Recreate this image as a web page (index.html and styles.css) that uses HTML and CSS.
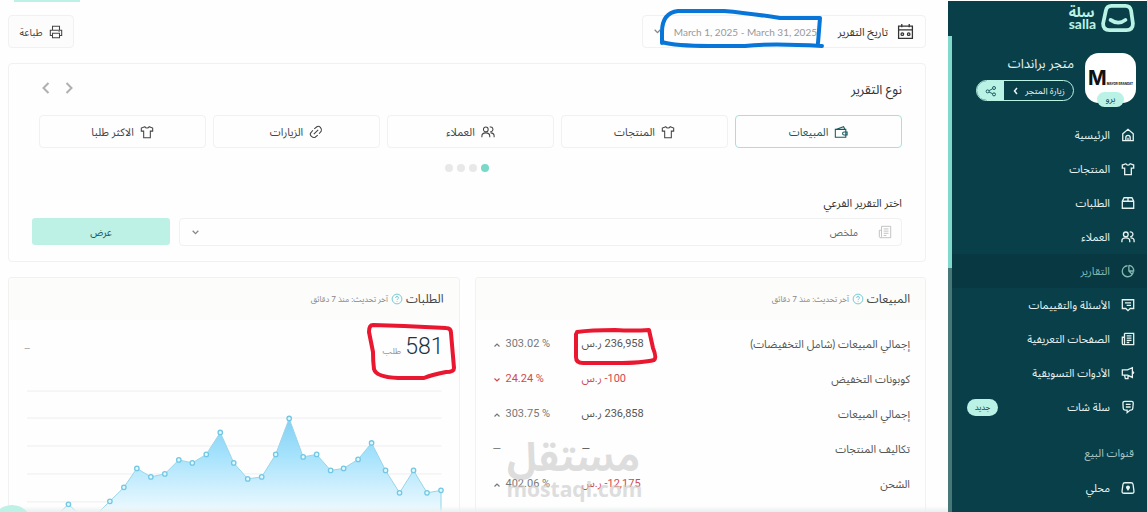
FILE: index.html
```html
<!DOCTYPE html>
<html lang="ar" dir="rtl">
<head>
<meta charset="utf-8">
<title>التقارير</title>
<link rel="stylesheet" href="styles.css">
</head>
<body>
<svg class="sprite" aria-hidden="true">
  <symbol id="shirt" viewBox="0 0 16 16"><path d="M5.500 2 1.500 3.500 1.500 7h2.700v7.500h7.600V7h2.700L14.500 3.500 10.500 2C9.500 4 6.500 4 5.500 2Z"/></symbol>
  <symbol id="users" viewBox="0 0 16 16"><circle cx="5.500" cy="5" r="2.700"/><path d="M1 14v-1.500C1 10 3 9 5.500 9s4.500 1 4.500 3.500V14M10 2.400a2.700 2.700 0 1 1 .5 5.200M11 9c2.500 0 4 1.200 4 3.500V14"/></symbol>
  <symbol id="news" viewBox="0 0 16 16"><path d="M4 1.500h10.500v13H3A1.500 1.500 0 0 1 1.500 13V6H4M4 1.500V13a1.500 1.500 0 0 1-1 1.500M6.500 4.500h5.500M6.500 7h5.500M6.500 9.500h5.500M6.500 12h3"/></symbol>
  <symbol id="help" viewBox="0 0 16 16"><circle cx="8" cy="8" r="6.500"/><path d="M6 6.500C6 4 10 4 10 6.500 10 8 8 8 8 9.500M8 11v1"/></symbol>
  <symbol id="up" viewBox="0 0 8 8"><path d="m1.500 5.500 2.500-2.500 2.500 2.500"/></symbol>
  <symbol id="down" viewBox="0 0 8 8"><path d="m1.500 2.500 2.500 2.500 2.500-2.500"/></symbol>
</svg>

<aside class="sidebar">
  <a class="logo" href="#">
    <svg class="logo-mark" viewBox="0 0 36 30"><path d="M11 2h15q5 0 6 5l2 14q0 7-7 7H9q-7 0-7-7L5 7Q6 2 11 2ZM10 17q8.500 6 16 0"/></svg>
    <span class="logo-text"><span>سلة</span><span class="latin">salla</span></span>
  </a>
  <div class="store">
    <div class="avatar"><b>M</b><small>MAYOR BRANDAT</small><span class="plan">برو</span></div>
    <div class="store-info">
      <h2>متجر براندات</h2>
      <div class="visit">
        <a href="#">زيارة المتجر <svg class="tiny" viewBox="0 0 8 8"><path d="M5 1 2.500 4 5 7"/></svg></a>
        <button class="share" aria-label="مشاركة"><svg viewBox="0 0 16 16"><circle cx="3.500" cy="8.500" r="2"/><circle cx="12" cy="4" r="2"/><circle cx="12" cy="12.500" r="2"/><path d="m5.500 7.500 4.500-2.500M5.500 9.500l4.500 2"/></svg></button>
      </div>
    </div>
  </div>
  <nav>
    <a href="#"><svg viewBox="0 0 16 16"><path d="M2 6.500 8 1.500l6 5v8H2ZM5.500 14.500V11q0-2.500 2.500-2.500t2.500 2.500v3.500M8 11v3"/></svg><span>الرئيسية</span></a>
    <a href="#"><svg><use href="#shirt"/></svg><span>المنتجات</span></a>
    <a href="#"><svg viewBox="0 0 16 16"><path d="M3.500 2h9L14.500 6v8h-13V6ZM1.500 6h13M8 2v4"/></svg><span>الطلبات</span></a>
    <a href="#"><svg><use href="#users"/></svg><span>العملاء</span></a>
    <a class="active" href="#"><svg viewBox="0 0 16 16"><path d="M7.500 2A6.300 6.300 0 1 0 14 9M9 1.500V8l4 4M9 8h5.500A6 6 0 0 0 9 1.500"/></svg><span>التقارير</span></a>
    <a href="#"><svg viewBox="0 0 16 16"><path d="M1.500 2h13v10h-4L8 14.500 5.500 12h-4ZM4.500 5.500h7M6.500 8.500h5"/></svg><span>الأسئلة والتقييمات</span></a>
    <a href="#"><svg><use href="#news"/></svg><span>الصفحات التعريفية</span></a>
    <a href="#"><svg viewBox="0 0 16 16"><path d="M1.500 4.500h6L13 2v11l-5.500-2.500h-6ZM13 6q3 1.500 0 3M4 10.500l1 4h3v-3.500"/></svg><span>الأدوات التسويقية</span></a>
    <a href="#"><svg viewBox="0 0 16 16"><path d="M4.500 1.500h7.500q2 0 2 2l-.5 6q0 2-2 2h-1L7 14.500V11.500H4.500q-2 0-2-2l-.3-6q0-2 2.300-2ZM5.500 5h5.500M5.500 8h5.500"/></svg><span>سلة شات</span><em>جديد</em></a>
  </nav>
  <h3>قنوات البيع</h3>
  <nav>
    <a href="#"><svg viewBox="0 0 16 16"><path d="M4.500 2h7q2 0 2.300 2l1 7.500q.2 2.500-2.300 2.500h-9Q1 14 1.200 11.500l1-7.500q.3-2 2.300-2Z"/><path class="solid" d="M8 11.500 5.800 8a2.300 2.300 0 1 1 4.400 0Z"/></svg><span>محلي</span></a>
  </nav>
</aside>

<main>
  <div class="tab-line"></div>
  <div class="toolbar">
    <div class="date">
      <label for="range"><svg viewBox="0 0 16 16"><path d="M1.500 3h13v11.500h-13ZM1.500 6.500h13M4.500 1v3M11.500 1v3"/><circle cx="5" cy="10.500" r="1.200"/><circle cx="11" cy="10.500" r="1.200"/></svg>تاريخ التقرير</label>
      <input id="range" dir="ltr" value="March 1, 2025 - March 31, 2025" readonly>
      <svg class="caret"><use href="#down"/></svg>
      <svg class="mark mark-date" viewBox="0 0 166 42"><path d="M2 35V24Q2 5 18 3H64Q88 5 120 10H160L158 35M2 34Q15 38 50 38H85Q110 35 162 38"/></svg>
    </div>
    <button class="print"><svg viewBox="0 0 16 16"><path d="M4 6V1.500h8V6M4 12H1.500V6h13v6H12M4 9.500h8v5H4ZM11 7.500h1"/></svg>طباعة</button>
  </div>

  <section class="card report">
    <div class="report-head">
      <h1>نوع التقرير</h1>
      <div class="arrows">
        <button aria-label="السابق"><svg viewBox="0 0 12 12"><path d="m3.500 1 5 5-5 5"/></svg></button>
        <button aria-label="التالي"><svg viewBox="0 0 12 12"><path d="m8.500 1-5 5 5 5"/></svg></button>
      </div>
    </div>
    <div class="types">
      <button class="on"><svg viewBox="0 0 16 16"><path d="M1.500 5h12v9h-12ZM2 5l9-3 1.500 3M15 8h-3.500a1.700 1.700 0 0 0 0 3.400H15Z"/></svg>المبيعات</button>
      <button><svg><use href="#shirt"/></svg>المنتجات</button>
      <button><svg><use href="#users"/></svg>العملاء</button>
      <button><svg viewBox="0 0 16 16"><path d="m5.500 10.500 5-5M6 4.500 9 2q2-1.500 4 .8T14 7l-2.500 3M4.500 6 2 9q-1.500 2 .8 4T7 14l3-2.500"/></svg>الزيارات</button>
      <button><svg><use href="#shirt"/></svg>الاكثر طلبا</button>
    </div>
    <div class="dots"><i class="on"></i><i></i><i></i><i></i></div>
    <label class="sub-label" for="sub">اختر التقرير الفرعي</label>
    <div class="sub">
      <div class="select">
        <svg class="doc"><use href="#news"/></svg>
        <select id="sub"><option>ملخص</option></select>
        <svg class="caret"><use href="#down"/></svg>
      </div>
      <button class="show">عرض</button>
    </div>
  </section>

  <div class="panels">
    <section class="card">
      <header><h2>المبيعات</h2><svg><use href="#help"/></svg><small>آخر تحديث: منذ 7 دقائق</small></header>
      <div class="sales">
        <table>
          <tr><th>إجمالي المبيعات (شامل التخفيضات)</th><td class="sum"><bdi>236,958</bdi> ر.س</td><td class="rate" dir="ltr"><svg><use href="#up"/></svg>303.02 %</td></tr>
          <tr class="neg"><th>كوبونات التخفيض</th><td class="sum"><bdi dir="ltr">-100</bdi> ر.س</td><td class="rate" dir="ltr"><svg><use href="#down"/></svg>24.24 %</td></tr>
          <tr><th>إجمالي المبيعات</th><td class="sum"><bdi>236,858</bdi> ر.س</td><td class="rate" dir="ltr"><svg><use href="#up"/></svg>303.75 %</td></tr>
          <tr><th>تكاليف المنتجات</th><td class="sum">—</td><td class="rate" dir="ltr">—</td></tr>
          <tr><th>الشحن</th><td class="sum red"><bdi dir="ltr">-12,175</bdi> ر.س</td><td class="rate" dir="ltr"><svg><use href="#up"/></svg>402.06 %</td></tr>
        </table>
        <svg class="mark mark-sum" viewBox="0 0 86 40"><path d="M4 5Q18 3 42 3 60 4 76 3L80 21Q84 31 81 33 70 36 43 36H10Q3 36 3 30V7"/></svg>
        <div class="watermark"><b>مستقل</b><span dir="ltr">mostaql.com</span></div>
      </div>
    </section>

    <section class="card">
      <header><h2>الطلبات</h2><svg><use href="#help"/></svg><small>آخر تحديث: منذ 7 دقائق</small></header>
      <div class="orders">
        <p class="count"><strong>581</strong><span>طلب</span></p><span class="dash">—</span>
        <svg class="mark mark-count" viewBox="0 0 90 60"><path d="M3 10Q3 3 7 3L38 4 80 6Q85 6 85 11L88 46Q88 50 80 50 65 53 58 56H32Q10 55 8 47 7 40 7 30Z"/></svg>
      </div>
      <svg class="chart" viewBox="0 0 420 150">
        <defs><linearGradient id="fill" gradientUnits="userSpaceOnUse" x1="0" y1="32" x2="0" y2="140"><stop offset="0" stop-color="#82cff3"/><stop offset=".35" stop-color="#a5e2fc"/><stop offset="1" stop-color="#fff"/></linearGradient></defs>
        <path class="grid" d="M3 6h415M3 33h415M3 61h415M3 89h415M3 117h415"/>
        <path class="area" d="M3 150V133L17 135 31 132 44.500 119.500 58 132 72 130 86 116.500 100 102.500 113 83.500 127 92 141 89 155 75 168.500 78 182.500 69.500 196.500 47.500 210 78 224 94 238 92 252 69.500 265.500 33.500 279.500 72 293 69.500 307 85.500 320 83.500 334.500 74.500 348 58 362 85.500 376 108 390 85.500 403.500 108 417.500 105.500V150Z"/>
        <g class="points"><circle cx="44.500" cy="119.500" r="2.200"/><circle cx="86" cy="116.500" r="2.200"/><circle cx="100" cy="102.500" r="2.200"/><circle cx="113" cy="83.500" r="2.200"/><circle cx="127" cy="92" r="2.200"/><circle cx="141" cy="89" r="2.200"/><circle cx="155" cy="75" r="2.200"/><circle cx="168.500" cy="78" r="2.200"/><circle cx="182.500" cy="69.500" r="2.200"/><circle cx="196.500" cy="47.500" r="2.200"/><circle cx="210" cy="78" r="2.200"/><circle cx="224" cy="94" r="2.200"/><circle cx="238" cy="92" r="2.200"/><circle cx="252" cy="69.500" r="2.200"/><circle cx="265.500" cy="33.500" r="2.200"/><circle cx="279.500" cy="72" r="2.200"/><circle cx="293" cy="69.500" r="2.200"/><circle cx="307" cy="85.500" r="2.200"/><circle cx="320" cy="83.500" r="2.200"/><circle cx="334.500" cy="74.500" r="2.200"/><circle cx="348" cy="58" r="2.200"/><circle cx="362" cy="85.500" r="2.200"/><circle cx="376" cy="108" r="2.200"/><circle cx="390" cy="85.500" r="2.200"/><circle cx="403.500" cy="108" r="2.200"/><circle cx="417.500" cy="105.500" r="2.200"/></g>
      </svg>
    </section>
  </div>
  <div class="fade"></div>
  <button class="bubble" aria-label="مساعدة"></button>
</main>
</body>
</html>
```
FILE: styles.css
```css
* { box-sizing: border-box; }
body {
  margin: 0;
  display: flex;
  height: 100vh;
  overflow: hidden;
  background: #fefefe;
  color: #444;
  font: 11px/16px Lato, "Noto Sans Arabic", "DejaVu Sans", sans-serif;
}
h1, h2, h3, p { margin: 0; font-weight: 400; }
a { color: inherit; text-decoration: none; }
button, input, select { font: inherit; color: inherit; background: none; border: 0; padding: 0; margin: 0; }
svg { width: 14px; height: 14px; flex: none; fill: none; stroke: currentColor; stroke-width: 1.2; overflow: visible; }
.sprite { position: absolute; width: 0; height: 0; }

.sidebar {
  flex: none;
  width: 199px;
  margin-top: 1px;
  background: #093f49;
  color: #e6f3f1;
  border-left: 4px solid;
  border-image: linear-gradient(#093f49 36px, #80d9cb 36px 267px, #467877 267px) 1;
}
.logo { display: flex; gap: 5px; padding: 3px 12px 0; height: 44px; color: #baf3e6; }
.logo-mark { width: 34px; height: 28px; stroke-width: 4; stroke-linecap: round; }
.logo-text { display: flex; flex-direction: column; align-items: flex-end; padding-top: 1px; font-weight: 700; font-size: 14px; line-height: 14px; }
.latin { font-size: 14px; line-height: 10px; }
.store { display: flex; gap: 11px; padding: 8px 11px 0; height: 73px; }
.avatar {
  position: relative;
  width: 51px; height: 50px;
  border-radius: 14px;
  background: #fff;
  color: #111;
  display: flex; flex-direction: row-reverse; align-items: center; justify-content: center;
}
.avatar b { font: 700 20px/24px Inter, sans-serif; }
.avatar small { font: 700 3px/4px Inter, sans-serif; padding-top: 11px; }
.plan { position: absolute; left: 12px; bottom: -4px; width: 27px; height: 15px; border-radius: 8px; background: #baf3e6; color: #0b4a50; font-size: 9px; line-height: 13px; text-align: center; }
.store-info h2 { font-size: 13px; line-height: 20px; }
.visit { display: flex; width: 98px; height: 21px; margin-top: 7px; border: 1px solid #baf3e6; border-radius: 11px; overflow: hidden; font-size: 9px; line-height: 17px; }
.visit a { flex: 1; display: flex; align-items: center; justify-content: center; gap: 5px; }
.tiny { width: 8px; height: 8px; stroke-width: 1.500; }
.share { width: 27px; background: #baf3e6; color: #0b4a50; display: grid; place-items: center; }
.share svg { width: 12px; height: 12px; }
.sidebar nav a { display: flex; align-items: center; gap: 11px; height: 34px; padding: 0 12px; }
.sidebar nav svg { stroke-width: 1.500; }
.sidebar nav .active { background: #083842; color: #82b8b0; }
.sidebar em { margin-right: auto; margin-left: 3px; width: 31px; height: 17px; border-radius: 9px; background: #baf3e6; color: #0b4a50; font-size: 8px; font-style: normal; text-align: center; }
.sidebar h3 { padding: 21px 13px 10px; font-size: 11px; line-height: 16px; color: #a9c5c2; }
.solid { fill: currentColor; stroke: none; }

main { position: relative; flex: 1; min-width: 0; height: 100vh; overflow: hidden; display: flex; flex-direction: column; padding: 0 22px 0 8px; }
.tab-line { flex: none; height: 2px; width: 66px; margin: 0 auto 13px 6px; background: #bdf0e6; }
.toolbar { display: flex; justify-content: space-between; margin-bottom: 15px; }
.date, .print, .card, .types button, .select { border: 1px solid #f1f1f1; border-radius: 4px; }
.date { position: relative; display: flex; align-items: center; width: 284px; height: 33px; }
.date label { display: flex; align-items: center; gap: 9px; width: 97px; padding-right: 11px; color: #333; white-space: nowrap; }
.date label svg { width: 17px; height: 17px; }
.date input { flex: 1; min-width: 0; padding-right: 11px; color: #999; text-align: right; font-size: 10px; }
.date .caret { margin: 0 10px; }
.caret { width: 9px; height: 9px; color: #888; }
.mark { position: absolute; stroke-width: 4; stroke-linecap: round; stroke-linejoin: round; color: #ea1730; }
.mark-date { left: 17px; top: -8px; width: 166px; height: 42px; color: #0875d8; }
.print { display: flex; align-items: center; justify-content: center; gap: 6px; width: 66px; height: 33px; background: #fcfcfc; font-size: 10px; }

.report { flex: none; height: 199px; padding: 15px 23px 0; margin-bottom: 15px; }
.report-head { display: flex; justify-content: space-between; height: 36px; }
.report-head h1 { font-size: 13px; line-height: 20px; color: #333; }
.arrows { display: flex; gap: 11px; padding: 3px 0 0 8px; height: 16px; }
.arrows svg { width: 12px; height: 12px; stroke-width: 2; color: #b0b0b0; }
.types { display: grid; grid-template-columns: repeat(5, 1fr); gap: 7px; padding-left: 7px; }
.types button { display: flex; align-items: center; justify-content: center; gap: 6px; height: 33px; }
.types .on { border-color: #a4e0dc; color: #155a60; }
.dots { display: flex; justify-content: center; gap: 4px; padding: 16px 0 0; }
.dots i { width: 8px; height: 8px; border-radius: 50%; background: #e8e8e8; }
.dots .on { background: #79d9c9; }
.sub-label { display: block; padding-top: 23px; line-height: 16px; height: 46px; color: #333; }
.sub { display: flex; gap: 9px; }
.select { flex: 1; display: flex; align-items: center; height: 28px; padding: 0 9px 0 11px; }
.doc { color: #bbb; stroke-width: 1; }
.select select { flex: 1; appearance: none; padding-right: 20px; font-size: 10px; color: #666; }
.show { width: 138px; height: 27px; border-radius: 3px; background: #bdf1e5; color: #17565e; font-size: 10px; }

.panels { flex: 1; min-height: 0; display: grid; grid-template-columns: 1fr 1fr; grid-template-rows: minmax(0, 1fr); gap: 15px; }
.panels .card { overflow: hidden; border-bottom: 0; border-radius: 4px 4px 0 0; }
.panels header { display: flex; align-items: center; gap: 3px; height: 42px; padding: 0 15px; background: #fcfcfa; }
.panels header h2 { font-size: 12px; }
.panels header svg { width: 12px; height: 12px; color: #67c5d2; }
.panels header small { font-size: 8px; color: #888; }
.sales, .orders { position: relative; }
table { width: 100%; border-spacing: 0; padding-top: 6px; color: #555; }
tr { height: 35px; }
th, td { padding: 0; font-weight: 400; }
th { text-align: right; padding-right: 15px; }
td { text-align: left; font-family: Roboto, "Noto Sans Arabic", "DejaVu Sans", sans-serif; }
.sum { width: 90px; }
.rate { width: 106px; padding-left: 17px; color: #777; }
.rate svg { width: 8px; height: 8px; margin-right: 5px; vertical-align: -2px; }
.neg td, .sum.red { color: #cf4a50; }
.mark-sum { left: 97px; top: 7px; width: 86px; height: 40px; }
.watermark { position: absolute; left: 31px; top: 114px; width: 134px; color: #ccc; opacity: .65; text-align: center; }
.watermark b { display: block; font-size: 40px; line-height: 44px; }
.watermark span { display: block; font: 700 21px/22px "Open Sans", sans-serif; }

.orders { display: flex; justify-content: space-between; height: 65px; padding: 12px 15px; }
.count { display: flex; align-items: baseline; gap: 4px; }
.count strong { font: 300 23px/30px Roboto, sans-serif; color: #234; }
.count span { font-size: 9px; color: #999; }
.dash { padding-top: 8px; font-size: 8px; color: #777; }
.mark-count { right: 3px; top: 2px; width: 90px; height: 60px; }
.chart { display: block; width: calc(100% - 30px); height: auto; margin: 0 15px; }
.grid { stroke: #eee; stroke-width: 1; }
.area { fill: url(#fill); stroke: #98d5e9; stroke-width: 1; }
.points { fill: #e2f7fd; stroke: #72c7e4; stroke-width: 1.300; }
.fade { position: absolute; left: 0; right: 0; bottom: 0; height: 6px; background: linear-gradient(#e8f0ee00, #e8f0ee); }
.bubble { position: absolute; left: -8px; bottom: -33px; width: 40px; height: 40px; border-radius: 50%; background: #bdf1e5; }
```
